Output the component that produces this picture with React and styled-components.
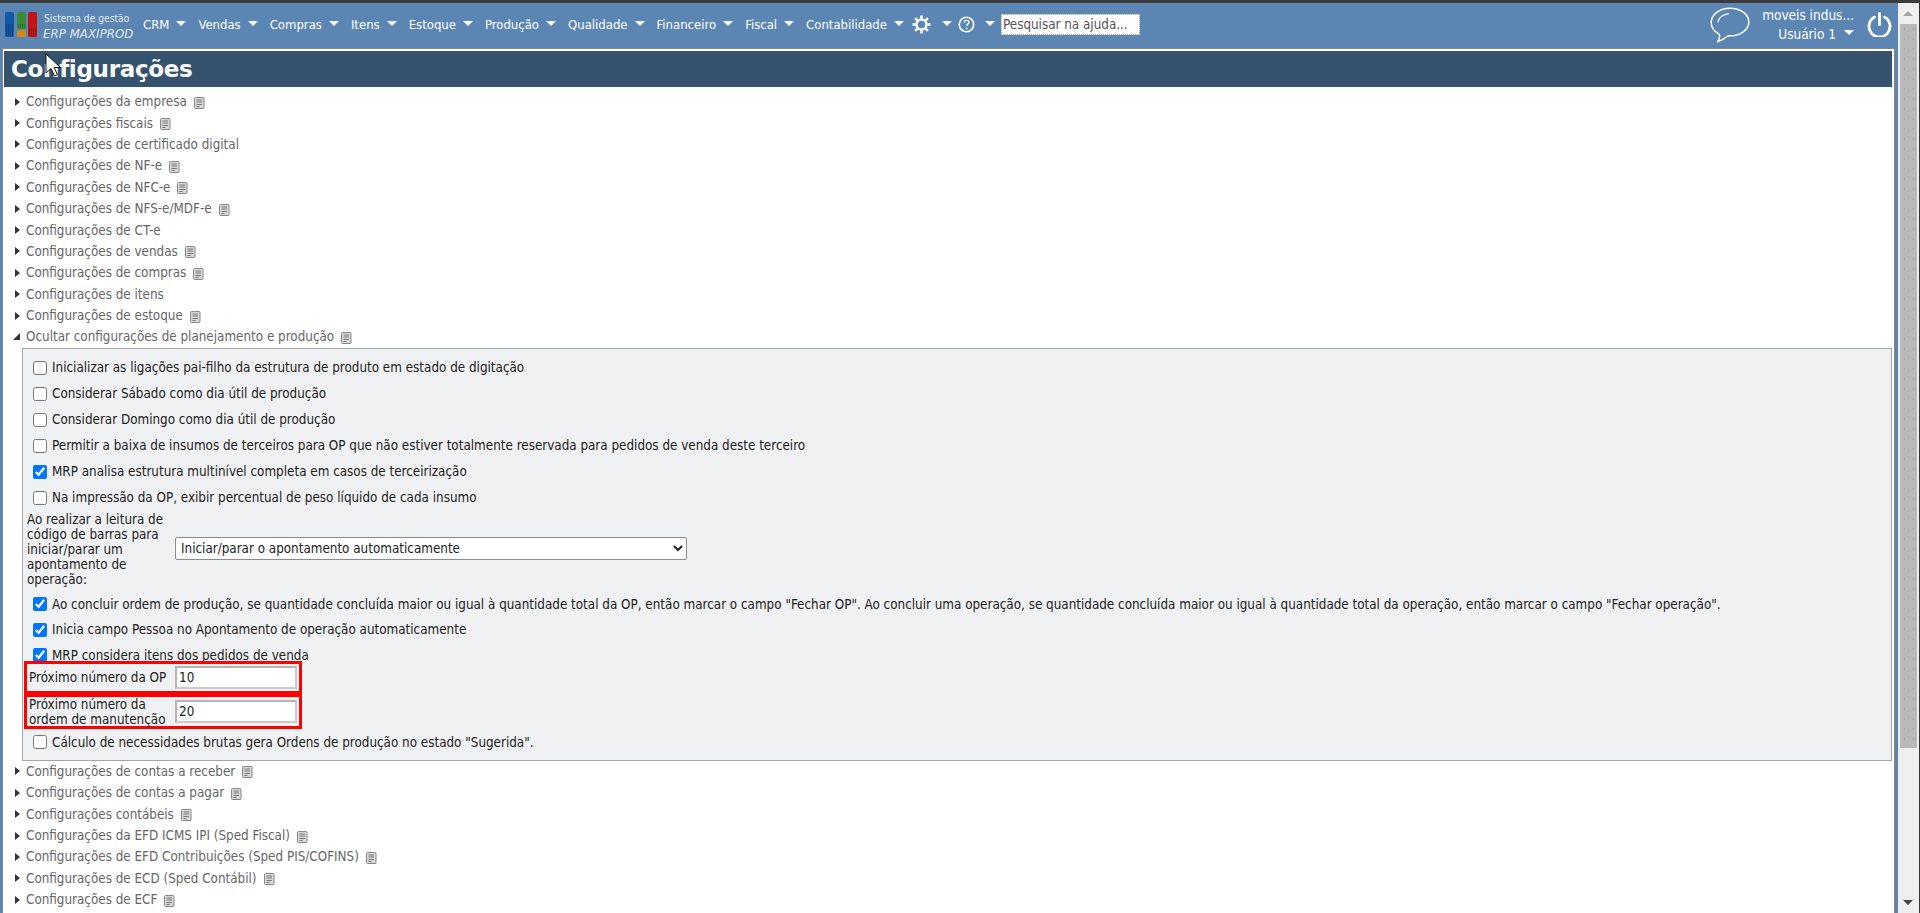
import React from "react";
import styled, { createGlobalStyle } from "styled-components";

const Global = createGlobalStyle`
  html, body { margin: 0; padding: 0; height: 100%; overflow: hidden; background: #5b86b3; }
  * { box-sizing: border-box; }
`;
const FONT = `"DejaVu Sans Condensed", "DejaVu Sans", sans-serif`;

const Page = styled.div`
  height: 913px; display: flex; flex-direction: column; overflow: hidden;
  font-family: ${FONT}; font-size: 13.33px; position: relative;
`;
const TopEdge = styled.div`height: 3px; background: #3b3b3b; flex: none;`;
const Body = styled.div`flex: 1; display: flex; min-height: 0;`;
const Main = styled.div`flex: 1; min-width: 0; display: flex; flex-direction: column;`;
const Nav = styled.nav`height: 45px; flex: none; display: flex; align-items: center; padding: 0 0 2px 5px; color: #fff;`;
const LogoBox = styled.div`display: flex; align-items: center; gap: 6px; width: 138px; flex: none;`;
const LogoText = styled.div`display: flex; flex-direction: column; line-height: 15px; color: #e2e8ef; margin-top: 2px;`;
const LogoTop = styled.span`font-size: 10.2px; padding-left: 1px;`;
const LogoBottom = styled.span`font-size: 13px; font-style: italic; font-weight: 500; letter-spacing: 0.1px;`;
const Menu = styled.div`display: flex; align-items: center;`;
const MenuItem = styled.div`display: flex; align-items: center; gap: ${p => p.$gap ?? 7}px; margin-right: ${p => p.$mr ?? 12}px; margin-left: ${p => p.$ml ?? 0}px; font-size: 13px; white-space: nowrap;`;
const Caret = styled.i`width: 0; height: 0; flex: none; border-left: 5px solid transparent; border-right: 5px solid transparent; border-top: 5px solid #fff; margin-top: -3px;`;
const HelpSearch = styled.input`
  width: 139px; height: 21px; border: 1px dotted #aaa; background: #fff; padding: 0 1px; margin: 0;
  font-family: ${FONT}; font-size: 13.33px; color: #555; outline: none;
  &::placeholder { color: #555; opacity: 1; }
`;
const Spacer = styled.div`flex: 1;`;
const UserBox = styled.div`display: flex; flex-direction: column; align-items: flex-end; margin: 0 13px 0 12px; gap: 3px; font-size: 13.5px; line-height: 16px;`;
const UserLine = styled.div`display: flex; align-items: center; gap: 8px;`;
const Content = styled.main`
  flex: 1; min-height: 0; margin: 0 3px 0 2px; background: #fff;
  border: 1px solid #888; border-bottom: 0; padding: 2px 2px 0 1px; overflow: hidden;
`;
const Title = styled.h1`
  margin: 0 0 4px; height: 36px; background: #35526f; color: #fff; padding-left: 7px;
  font-family: "DejaVu Sans", sans-serif; font-size: 23px; line-height: 36px; font-weight: 700; letter-spacing: -0.3px;
`;
const Row = styled.div`
  height: 21.4px; display: flex; align-items: center; padding-left: 9px; color: #666; font-size: 13.33px; white-space: nowrap;
`;
const Arrow = styled.i`
  width: 0; height: 0; flex: none;
  ${p => p.$open
    ? `border-bottom: 7px solid #333; border-left: 7px solid transparent; margin-right: 6px;`
    : `border-left: 5px solid #333; border-top: 4.5px solid transparent; border-bottom: 4.5px solid transparent; margin-left: 2px; margin-right: 6px;`}
`;
const DocWrap = styled.span`display: inline-flex; margin-left: 7px; margin-top: 2px;`;
const Panel = styled.section`
  margin-left: 18px; padding: 6px 0 4px; background: #f0f1f2; border: 1px solid #a3a6aa; height: 413px; color: #222;
`;
const CheckRow = styled.label`height: ${p => p.$h ?? 26}px; display: flex; align-items: center; padding-left: 10px; gap: 5px; white-space: nowrap;`;
const Check = styled.input`width: 14px; height: 14px; margin: 0; flex: none;`;
const FieldRow = styled.div`display: flex; align-items: center; padding: 1px 0 5px 4px;`;
const FieldLabel = styled.div`width: 148px; flex: none; line-height: 15px; color: #222;`;
const Selector = styled.select`
  width: 512px; height: 23px; font-family: ${FONT}; font-size: 13.33px; color: #222;
  background: #fff; border: 1px solid #8c8c8c; border-radius: 2px; padding: 0 1px; margin-bottom: 2px;
`;
const Frames = styled.div`margin: -7px 0 0 1px; width: 278px; position: relative;`;
const Frame = styled.div`
  height: ${p => p.$h}px; border: 3px solid #f00; display: flex; align-items: center; padding-left: 2px;
`;
const FrameLabel = styled.div`width: 146px; flex: none; line-height: 15px; color: #222;`;
const NumberInput = styled.input`
  width: 122px; height: 23px; margin: 0; border: 2px solid #b5b5b5; border-right-color: #ccc; border-bottom-color: #ccc; background: #fff;
  font-family: ${FONT}; font-size: 13.33px; padding: 0 2px; color: #222; outline: none;
`;
const Scrollbar = styled.aside`
  width: 22px; flex: none; background: #efefef; display: flex; flex-direction: column; align-items: flex-start;
  border-right: 1px solid #333;
`;
const ScrollBtn = styled.div`height: 21px; flex: none; width: 20px; display: flex; align-items: center; justify-content: center;`;
const ScrollUp = styled.i`width: 0; height: 0; border-left: 5px solid transparent; border-right: 5px solid transparent; border-bottom: 5px solid #a3a3a3;`;
const ScrollDown = styled.i`width: 0; height: 0; border-left: 5px solid transparent; border-right: 5px solid transparent; border-top: 5px solid #444;`;
const Thumb = styled.div`
  width: 17px; margin-left: 2px; height: 724px; flex: none; background-color: #b9b9b9;
  background-image: radial-gradient(#a6a6a6 0.7px, transparent 1px);
  background-size: 9px 10px;
`;
const Track = styled.div`flex: 1;`;
const Cursor = styled.svg`position: absolute; left: 45px; top: 53px; pointer-events: none;`;
const PowerSlot = styled.div`margin-right: 6px; display: flex;`;

const Doc = () => (
  <DocWrap>
    <svg width="11" height="12" viewBox="0 0 11 12">
      <rect x="0.5" y="0.5" width="9.5" height="11" rx="1" fill="#d8d8d8" stroke="#888" />
      <path d="M2.5 3h5.5M2.5 5h5.5M2.5 7.5h5.5M2.5 9.5h3" stroke="#777" strokeWidth="1" />
    </svg>
  </DocWrap>
);

const Logo = () => (
  <svg width="32" height="25" viewBox="0 0 32 25">
    <rect x="0" y="0" width="9" height="25" rx="1.500" fill="#1459a8" />
    <rect x="12" y="0" width="9" height="17" rx="1.500" fill="#3b8a35" />
    <rect x="12" y="18" width="9" height="7" rx="1.500" fill="#cf8a1d" />
    <rect x="23" y="0" width="9" height="25" rx="1.500" fill="#c21414" />
    <path d="M1 13h7M1 15h7M1 17h7M1 19h7M1 21h7M1 23h7" stroke="#0b2a55" strokeDasharray="1 1" />
    <path d="M13 13h7M13 15h7" stroke="#1d5a24" strokeDasharray="1 1" />
    <path d="M24 17h7M24 19h7M24 21h7M24 23h7" stroke="#6a0c0c" strokeDasharray="1 1" />
  </svg>
);

const Gear = () => (
  <svg width="19" height="19" viewBox="0 0 19 19" fill="none">
    <circle cx="9.5" cy="9.5" r="5" stroke="#fff" strokeWidth="2.4" />
    <path d="M9.5 0.5v3M9.5 15.5v3M0.5 9.5h3M15.500 9.500h3M3.100 3.100l2.100 2.100M13.800 13.800l2.100 2.100M3.100 15.900l2.100-2.100M13.800 5.200l2.100-2.100" stroke="#fff" strokeWidth="2.6" />
  </svg>
);
const Help = () => (
  <svg width="17" height="17" viewBox="0 0 17 17" fill="none">
    <circle cx="8.5" cy="8.5" r="7.2" stroke="#fff" strokeWidth="1.6" />
    <path d="M6.2 6.6c0-1.4 1-2.2 2.4-2.2s2.3.9 2.3 2c0 1.700-2.300 1.800-2.300 3.600" stroke="#fff" strokeWidth="1.4" />
    <circle cx="8.6" cy="12.4" r="0.95" fill="#fff" />
  </svg>
);
const Bubble = () => (
  <svg width="40" height="36" viewBox="0 0 40 36" fill="none">
    <path d="M20 1.2C9.6 1.2 1.2 7.6 1.2 15.5c0 4.7 3 8.8 7.5 11.4 1.2.8 1.3 1.8.9 3.2-.4 1.5-1.100 3-1.700 4.400 3.500-.9 7-3 9.300-5.200.8-.6 1.600-.5 2.800-.5 10.400 0 18.800-6.100 18.800-13.800S30.400 1.200 20 1.200z" stroke="#fff" strokeWidth="1.5" />
    <path d="M8 15c.6-4 4.500-7.500 10.500-8.300" stroke="#dfe8f1" strokeWidth="1.4" strokeLinecap="round" />
  </svg>
);
const Power = () => (
  <svg width="25" height="25" viewBox="0 0 25 25" fill="none">
    <path d="M7.600 5.100a10.500 10.500 0 1 0 9.800 0" stroke="#fff" strokeWidth="2.8" strokeLinecap="round" />
    <path d="M12.500 1.500v11" stroke="#fff" strokeWidth="2.8" strokeLinecap="round" />
  </svg>
);

const menu = ["CRM", "Vendas", "Compras", "Itens", "Estoque", "Produção", "Qualidade", "Financeiro", "Fiscal", "Contabilidade"];
const before = [
  ["Configurações da empresa", 1], ["Configurações fiscais", 1], ["Configurações de certificado digital", 0],
  ["Configurações de NF-e", 1], ["Configurações de NFC-e", 1], ["Configurações de NFS-e/MDF-e", 1],
  ["Configurações de CT-e", 0], ["Configurações de vendas", 1], ["Configurações de compras", 1],
  ["Configurações de itens", 0], ["Configurações de estoque", 1],
];
const after = [
  "Configurações de contas a receber", "Configurações de contas a pagar", "Configurações contábeis",
  "Configurações da EFD ICMS IPI (Sped Fiscal)", "Configurações de EFD Contribuições (Sped PIS/COFINS)",
  "Configurações de ECD (Sped Contábil)", "Configurações de ECF",
];
const checks1 = [
  ["Inicializar as ligações pai-filho da estrutura de produto em estado de digitação", false],
  ["Considerar Sábado como dia útil de produção", false],
  ["Considerar Domingo como dia útil de produção", false],
  ["Permitir a baixa de insumos de terceiros para OP que não estiver totalmente reservada para pedidos de venda deste terceiro", false],
  ["MRP analisa estrutura multinível completa em casos de terceirização", true],
  ["Na impressão da OP, exibir percentual de peso líquido de cada insumo", false],
];
const checks2 = [
  [`Ao concluir ordem de produção, se quantidade concluída maior ou igual à quantidade total da OP, então marcar o campo "Fechar OP". Ao concluir uma operação, se quantidade concluída maior ou igual à quantidade total da operação, então marcar o campo "Fechar operação".`, true],
  ["Inicia campo Pessoa no Apontamento de operação automaticamente", true],
  ["MRP considera itens dos pedidos de venda", true],
];

const CheckLine = ({ text, on, h }) => (
  <CheckRow $h={h}><Check type="checkbox" defaultChecked={on} />{text}</CheckRow>
);

export default function App() {
  return (
    <Page>
      <Global />
      <TopEdge />
      <Body>
        <Main>
          <Nav>
            <LogoBox>
              <Logo />
              <LogoText>
                <LogoTop>Sistema de gestão</LogoTop>
                <LogoBottom>ERP MAXIPROD</LogoBottom>
              </LogoText>
            </LogoBox>
            <Menu>
              {menu.map(m => <MenuItem key={m}>{m}<Caret /></MenuItem>)}
              <MenuItem $gap={11} $mr={6} $ml={-4}><Gear /><Caret /></MenuItem>
              <MenuItem $gap={10} $mr={6}><Help /><Caret /></MenuItem>
              <HelpSearch placeholder="Pesquisar na ajuda..." />
            </Menu>
            <Spacer />
            <Bubble />
            <UserBox>
              <div>moveis indus...</div>
              <UserLine>Usuário 1<Caret /></UserLine>
            </UserBox>
            <PowerSlot><Power /></PowerSlot>
          </Nav>
          <Content>
            <Title>Configurações</Title>
            {before.map(([t, d]) => <Row key={t}><Arrow />{t}{d ? <Doc /> : null}</Row>)}
            <Row><Arrow $open />Ocultar configurações de planejamento e produção<Doc /></Row>
            <Panel>
              {checks1.map(([t, c]) => <CheckLine key={t} text={t} on={c} />)}
              <FieldRow>
                <FieldLabel>Ao realizar a leitura de código de barras para iniciar/parar um apontamento de operação:</FieldLabel>
                <Selector defaultValue="a"><option value="a">Iniciar/parar o apontamento automaticamente</option></Selector>
              </FieldRow>
              {checks2.map(([t, c]) => <CheckLine key={t} text={t} on={c} h={25.5} />)}
              <Frames>
                <Frame $h={33}><FrameLabel>Próximo número da OP</FrameLabel><NumberInput defaultValue="10" /></Frame>
                <Frame $h={35}><FrameLabel>Próximo número da ordem de manutenção</FrameLabel><NumberInput defaultValue="20" /></Frame>
              </Frames>
              <CheckLine text={`Cálculo de necessidades brutas gera Ordens de produção no estado "Sugerida".`} on={false} />
            </Panel>
            {after.map(t => <Row key={t}><Arrow />{t}<Doc /></Row>)}
          </Content>
        </Main>
        <Scrollbar>
          <ScrollBtn><ScrollUp /></ScrollBtn>
          <Thumb />
          <Track />
          <ScrollBtn><ScrollDown /></ScrollBtn>
        </Scrollbar>
      </Body>
      <Cursor width="16" height="24" viewBox="0 0 16 24">
        <path d="M1 1v19l5-4.500 3.500 7.500 3-1.300-3.400-7.200H15.500z" fill="#fff" stroke="#111" strokeWidth="1" />
      </Cursor>
    </Page>
  );
}
